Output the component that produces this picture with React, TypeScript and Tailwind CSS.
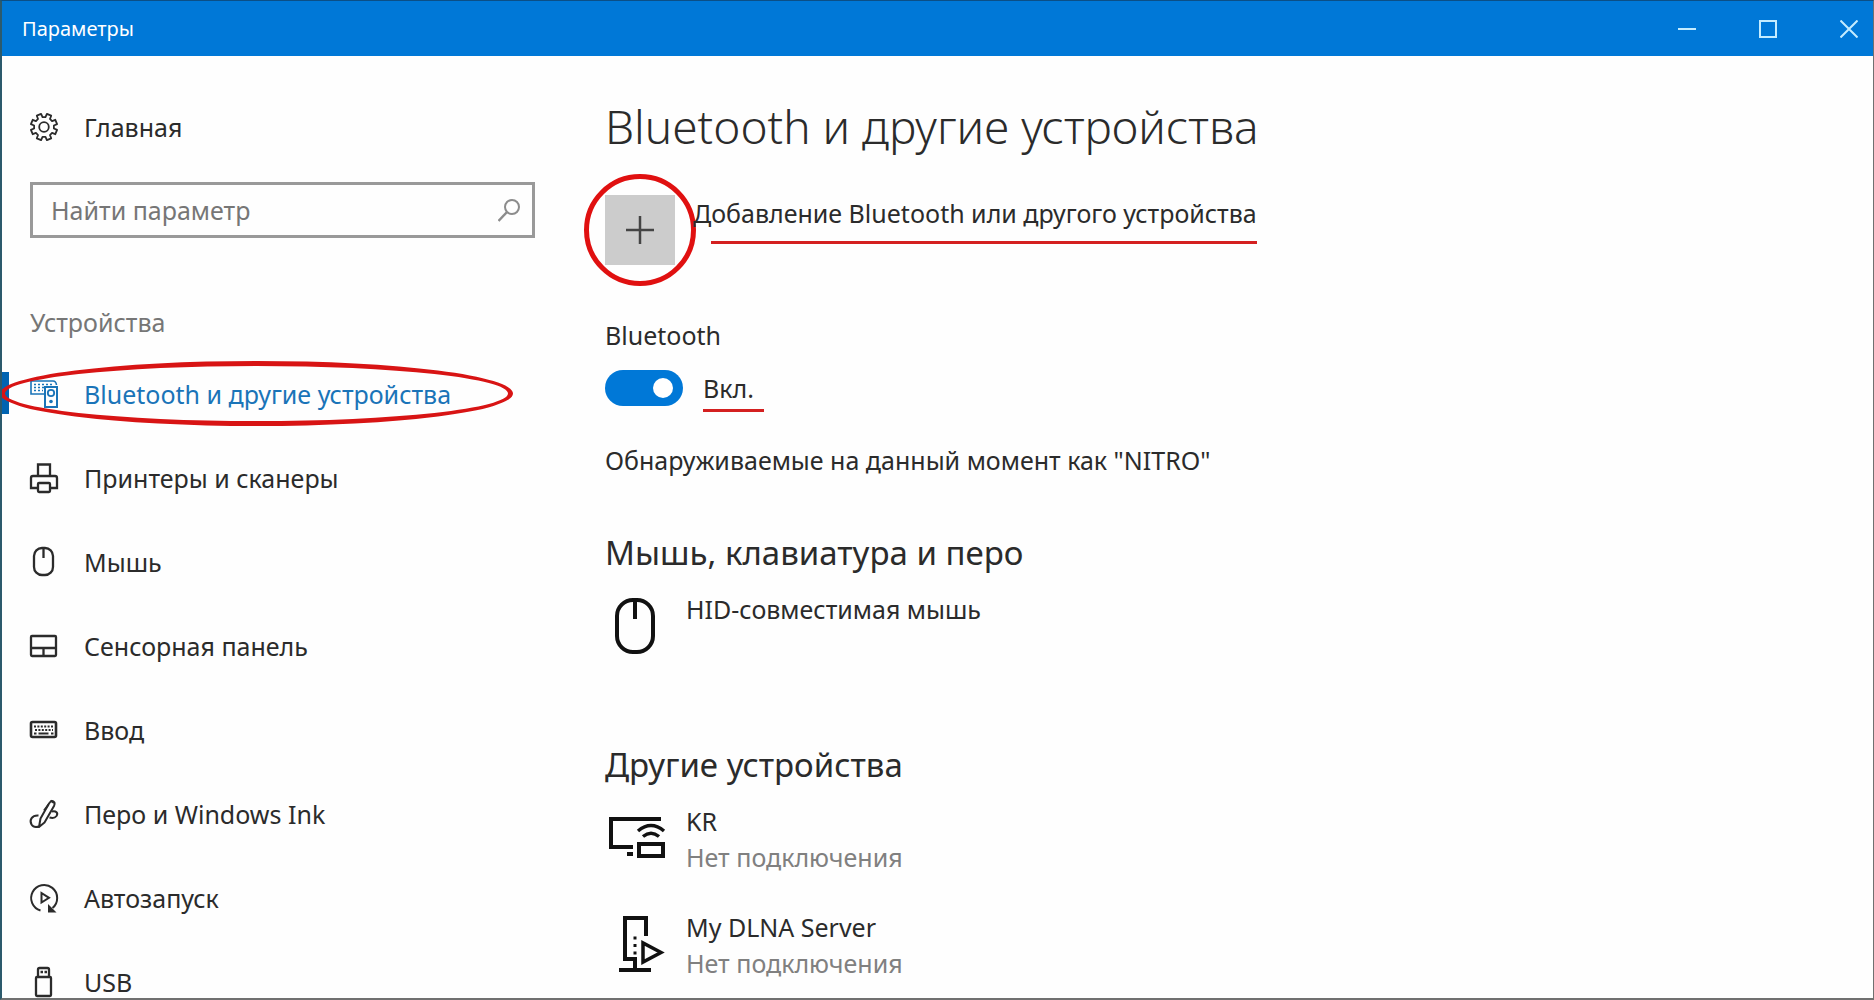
import { useState, type ReactNode } from 'react';

const gearPath = (() => {
  const points: string[] = [];
  const add = (radius: number, degrees: number) => {
    const a = (degrees * Math.PI) / 180;
    points.push(`${(14 + radius * Math.cos(a)).toFixed(2)} ${(14 + radius * Math.sin(a)).toFixed(2)}`);
  };
  for (let i = 0; i < 8; i += 1) {
    const center = 22.5 + i * 45;
    add(10, center - 14);
    add(13.4, center - 10);
    add(13.4, center + 10);
    add(10, center + 14);
  }
  return `M${points.join('L')}Z`;
})();

function NavSvg({ children }: { children: ReactNode }) {
  return (
    <svg viewBox="0 0 28 28" className="size-7 shrink-0 overflow-visible" fill="none" stroke="currentColor" strokeWidth="2.3" aria-hidden="true">
      {children}
    </svg>
  );
}

const GearIcon = () => (
  <NavSvg>
    <path d={gearPath} strokeWidth="1.8" strokeLinejoin="round" />
    <circle cx="14" cy="14" r="4.8" strokeWidth="1.8" />
  </NavSvg>
);

const DevicesIcon = () => (
  <NavSvg>
    <path d="M14 14H1V1H23Q26 1 26.500 5" strokeWidth="1.6" />
    <path d="M4 4.500H22M4 7.500H14M4 10.500H13" strokeWidth="1.6" strokeDasharray="2 2" />
    <rect x="15" y="7" width="12" height="20" strokeWidth="2" />
    <circle cx="21" cy="13" r="3.200" strokeWidth="1.8" />
    <circle cx="21" cy="21.500" r="1.800" fill="currentColor" stroke="none" />
  </NavSvg>
);

const PrinterIcon = () => (
  <NavSvg>
    <path d="M8 12V0.500H20V12" />
    <path d="M8 24H1V14Q1 12 3 12H25Q27 12 27 14V24H20" />
    <rect x="8" y="19" width="12" height="9" rx="1" />
  </NavSvg>
);

const MouseIcon = () => (
  <NavSvg>
    <rect x="4" y="0" width="19" height="27" rx="8" />
    <path d="M13.500 0V10" />
  </NavSvg>
);

const TouchpadIcon = () => (
  <NavSvg>
    <rect x="1" y="4" width="25" height="20" rx="1" />
    <path d="M1 16H26M13.500 16V24" />
  </NavSvg>
);

const KeyboardIcon = () => (
  <NavSvg>
    <rect x="1" y="6" width="25" height="15" rx="1.500" strokeWidth="2.6" />
    <path d="M4 10.500H24M5 14H23" strokeWidth="1.8" strokeDasharray="2 1.400" />
    <path d="M4 17.500H6.500M8.500 17.500H18.500M21 17.500H23.500" strokeWidth="2" />
  </NavSvg>
);

const PenIcon = () => (
  <NavSvg>
    <path d="M9 27L10.500 18.500L19 3.500Q22 -1 24.500 2.500Q25 4 24 6L14.500 22.500L9 27Z" strokeWidth="2" strokeLinejoin="round" />
    <path d="M18.500 4.500L14 10.500M20.500 0.500L24 3" strokeWidth="2" />
    <path d="M8.500 15.500C2 15 -1 20 1.500 24.500C3 27 6 27.500 9 26.500" strokeWidth="2" />
    <path d="M22 11.500C26 10.500 28.500 13 26.500 16C25 18 22 18.200 19.500 17.500" strokeWidth="2" />
  </NavSvg>
);

const AutoplayIcon = () => (
  <NavSvg>
    <path d="M10.500 26.500A13 13 0 1 1 22.500 24" strokeWidth="2" />
    <path d="M18 20V28.500H26.500Z" fill="currentColor" stroke="none" />
    <path d="M11.500 9V18.500L19 13.800Z" strokeWidth="2" />
  </NavSvg>
);

const UsbIcon = () => (
  <NavSvg>
    <rect x="6" y="9" width="15" height="19" rx="1" />
    <path d="M8 9V1.500Q8 0 9.500 0H17.500Q19 0 19 1.500V9" />
    <path d="M10.500 4H13M14.500 4H17" strokeWidth="2.500" />
  </NavSvg>
);

function DeviceSvg({ children }: { children: ReactNode }) {
  return (
    <svg viewBox="2 0 64 56" className="mt-[7px] h-14 w-16 shrink-0" fill="none" stroke="#111" strokeWidth="4" aria-hidden="true">
      {children}
    </svg>
  );
}

const LargeMouseIcon = () => (
  <DeviceSvg>
    <rect x="14" y="2" width="36" height="52" rx="16" />
    <path d="M32 2V21" />
  </DeviceSvg>
);

const CastIcon = () => (
  <DeviceSvg>
    <path d="M58 9H8V37H30M24 44H30" />
    <rect x="36" y="34" width="24" height="12" />
    <path d="M35 21Q48 10 61 21M40 26.500Q48 20 56 26.500" strokeWidth="3.500" />
  </DeviceSvg>
);

const ServerIcon = () => (
  <DeviceSvg>
    <path d="M43 20V2H22V43H32V54M16 54H48" />
    <path d="M32 20.500V39" strokeWidth="3" strokeDasharray="3 4.500" />
    <path d="M40 27V46L58 36.500Z" strokeWidth="3.500" />
  </DeviceSvg>
);

const navItems = [
  { label: 'Bluetooth и другие устройства', Icon: DevicesIcon, active: true },
  { label: 'Принтеры и сканеры', Icon: PrinterIcon },
  { label: 'Мышь', Icon: MouseIcon },
  { label: 'Сенсорная панель', Icon: TouchpadIcon },
  { label: 'Ввод', Icon: KeyboardIcon },
  { label: 'Перо и Windows Ink', Icon: PenIcon },
  { label: 'Автозапуск', Icon: AutoplayIcon },
  { label: 'USB', Icon: UsbIcon },
];

function TitleBar() {
  return (
    <header className="flex h-[55px] shrink-0 items-center justify-between bg-[#0078d7] pl-5 text-white">
      <span className="text-[20px] leading-7">Параметры</span>
      <div className="flex gap-[33px]">
        <button type="button" aria-label="Свернуть" className="grid size-12 place-items-center">
          <svg viewBox="0 0 18 18" className="size-[18px]" stroke="#c4ecff" strokeWidth="2" fill="none"><path d="M0 9H18" /></svg>
        </button>
        <button type="button" aria-label="Развернуть" className="grid size-12 place-items-center">
          <svg viewBox="0 0 18 18" className="size-[18px]" stroke="#c4ecff" strokeWidth="2" fill="none"><path d="M1 1H17V17H1Z" /></svg>
        </button>
        <button type="button" aria-label="Закрыть" className="grid size-12 place-items-center">
          <svg viewBox="0 0 18 18" className="size-[18px]" stroke="#c4ecff" strokeWidth="2" fill="none"><path d="M0.500 0.500L17.500 17.500M17.500 0.500L0.500 17.500" /></svg>
        </button>
      </div>
    </header>
  );
}

function Sidebar() {
  return (
    <aside className="w-[533px] shrink-0">
      <a href="#home" className="mt-[43px] flex h-14 items-center gap-[26px] pl-7">
        <GearIcon />
        Главная
      </a>
      <div className="mt-[27px] ml-7 flex h-14 items-center border-3 border-[#999] pr-3 pl-[18px]">
        <input type="text" aria-label="Найти параметр" placeholder="Найти параметр" className="min-w-0 flex-1 bg-transparent outline-none placeholder:text-[#767676]" />
        <svg viewBox="0 0 22 23" className="h-[23px] w-[22px]" fill="none" stroke="#8c8c8c" strokeWidth="2" aria-hidden="true">
          <circle cx="14" cy="8" r="7" />
          <path d="M9 13L0.500 22" strokeWidth="2.500" />
        </svg>
      </div>
      <h2 className="mt-14 flex h-14 items-center pl-7 text-[#767676]">Устройства</h2>
      <nav className="mt-0.5">
        {navItems.map(({ label, Icon, active }) => (
          <a
            key={label}
            href="#section"
            aria-current={active ? 'page' : undefined}
            className={`relative flex h-[84px] items-center gap-[26px] pl-7 ${active ? 'text-[#1a74b8]' : ''}`}
          >
            {active && <span className="absolute top-5 left-0 h-[42px] w-[7px] bg-[#0063b1]" />}
            <Icon />
            {label}
            {active && <span className="absolute top-[9px] -left-0.5 h-[65px] w-[513px] rounded-[50%] border-5 border-[#d81414]" />}
          </a>
        ))}
      </nav>
    </aside>
  );
}

function Device({ icon, name, status }: { icon: ReactNode; name: string; status?: string }) {
  return (
    <li className="flex min-h-[72px] gap-[17px]">
      {icon}
      <div>
        <p>{name}</p>
        {status && <p className="text-[#808080]">{status}</p>}
      </div>
    </li>
  );
}

function Content() {
  const [enabled, setEnabled] = useState(true);
  return (
    <main className="min-w-0 flex-1 pt-[38px] pl-[70px]">
      <h1 className="text-[46px] leading-[64px] font-[350]">Bluetooth и другие устройства</h1>

      <div className="mt-[37px] flex gap-[18px]">
        <div className="relative">
          <button type="button" id="add-device" aria-labelledby="add-device-label" className="grid size-[70px] place-items-center bg-[#ccc]">
            <svg viewBox="0 0 28 28" className="size-7" stroke="#444" strokeWidth="2.500" aria-hidden="true"><path d="M14 0V28M0 14H28" /></svg>
          </button>
          <span className="pointer-events-none absolute -inset-[21px] rounded-full border-5 border-[#e01010]" />
        </div>
        <label id="add-device-label" htmlFor="add-device" className="relative h-9">
          Добавление Bluetooth или другого устройства
          <span className="absolute top-[46px] right-0 left-[18px] h-[3px] bg-[#d42020]" />
        </label>
      </div>

      <section>
        <h2 className="mt-[52px]">Bluetooth</h2>
        <label className="mt-[17px] flex items-center gap-5">
          <input
            type="checkbox"
            role="switch"
            aria-label="Bluetooth"
            checked={enabled}
            onChange={(e) => setEnabled(e.target.checked)}
            className="flex h-9 w-[78px] appearance-none items-center rounded-full bg-[#999] px-2.5 before:size-5 before:rounded-full before:bg-white checked:justify-end checked:bg-[#0078d7]"
          />
          <span className="relative">
            {enabled ? 'Вкл.' : 'Откл.'}
            <span className="absolute top-[39px] -right-2.5 left-0 h-[3px] bg-[#d42020]" />
          </span>
        </label>
        <p className="mt-9">Обнаруживаемые на данный момент как "NITRO"</p>
      </section>

      <section className="mt-[51px]">
        <h2 className="text-[33px] leading-[48px]">Мышь, клавиатура и перо</h2>
        <ul className="mt-[14px]">
          <Device icon={<LargeMouseIcon />} name="HID-совместимая мышь" />
        </ul>
      </section>

      <section className="mt-[78px]">
        <h2 className="text-[33px] leading-[48px]">Другие устройства</h2>
        <ul className="mt-[14px] flex flex-col gap-[34px]">
          <Device icon={<CastIcon />} name="KR" status="Нет подключения" />
          <Device icon={<ServerIcon />} name="My DLNA Server" status="Нет подключения" />
        </ul>
      </section>
    </main>
  );
}

export default function App() {
  return (
    <div className="flex h-screen flex-col overflow-hidden border-t border-r border-b-2 border-l-2 border-t-[#0b4f86] border-r-[#707070] border-b-[#707070] border-l-[#2c5a6c] bg-[#fefefe] font-['Noto_Sans','Open_Sans',sans-serif] text-[25px] leading-9 text-[#2b2b2b]">
      <TitleBar />
      <div className="flex min-h-0 flex-1">
        <Sidebar />
        <Content />
      </div>
    </div>
  );
}
